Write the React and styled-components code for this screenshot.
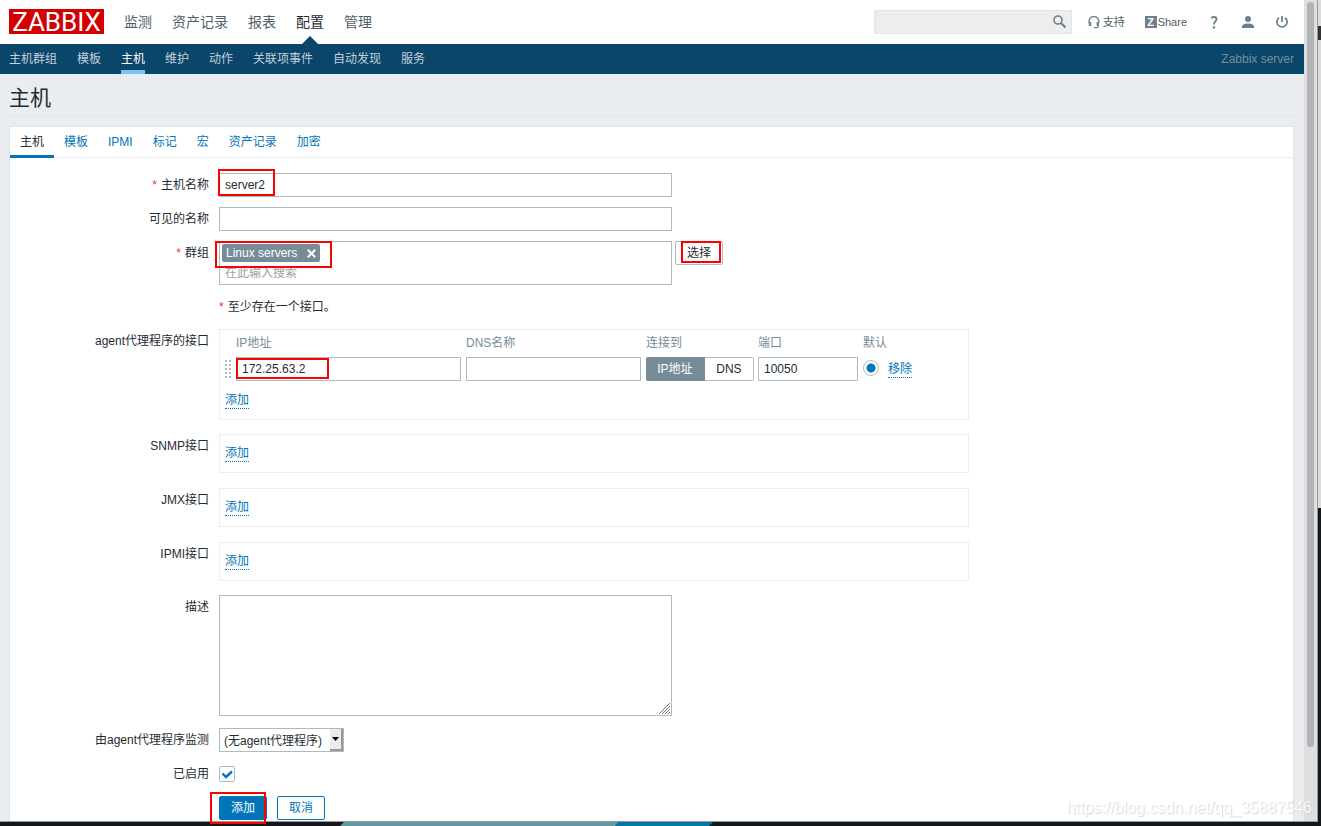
import React from "react";
import styled, { createGlobalStyle, css } from "styled-components";

const c = {
  text: "#1f2c33",
  link: "#0275b8",
  grey: "#768d99",
  field: "#acbbc2",
  line: "#dfe4e7",
  soft: "#ebeef0",
  navy: "#0a466a",
  icon: "#6c808d",
};

const GlobalStyle = createGlobalStyle`
  *, *::before, *::after { box-sizing: border-box; }
  body {
    margin: 0;
    background: #14171a;
    color: ${c.text};
    font: 12px/24px "Liberation Sans", "Noto Sans CJK SC", sans-serif;
  }
  button, input, select, textarea { font: inherit; color: inherit; margin: 0; }
  a { text-decoration: none; color: ${c.link}; }
  svg { display: block; }
`;

/* Desktop around the browser window */
const Desktop = styled.div`
  display: grid;
  grid-template-columns: minmax(0, 1fr) 3px;
  grid-template-rows: 1fr 4px;
  min-height: 100vh;
`;
const BrowserWindow = styled.div`
  position: relative;
  display: flex;
  border-right: 1px solid #999;
  border-bottom: 1px solid #999;
`;
const SideStrip = styled.div`
  display: grid;
  grid-template-rows: 26px 14px 468px 1fr;
  background: #14171a;
`;
const Slice = styled.div`
  background: ${(p) => p.$color};
`;
const Wallpaper = styled.svg`
  grid-column: 1 / -1;
  width: 100%;
  height: 4px;
`;
const Page = styled.div`
  flex: 1;
  min-width: 0;
  display: flex;
  flex-direction: column;
  background: #e9edf0;
`;
const ScrollTrack = styled.div`
  flex: none;
  display: grid;
  width: 13px;
  padding: 2px 3px 0;
  grid-template-rows: minmax(0, 91%) 1fr;
  background: #dfdfdf;
`;
const ScrollThumb = styled.div`
  border-radius: 4px;
  background: #b3b3b5;
`;
const Watermark = styled.div`
  position: absolute;
  right: 5px;
  bottom: 1px;
  font-size: 16px;
  color: #fff;
  opacity: 0.8;
  text-shadow: 1px 1px 1px #ccc;
  pointer-events: none;
`;

/* Header */
const Header = styled.header`
  display: flex;
  align-items: center;
  height: 44px;
  padding: 0 15px 0 9px;
  background: #fff;
`;
const Logo = styled.a`
  align-self: flex-start;
  width: 95px;
  height: 25px;
  margin: 9px 20px 0 0;
  background: #d40000;
  color: #fff;
  font-family: Roboto, "Liberation Sans", sans-serif;
  font-size: 26px;
  line-height: 26px;
  text-align: center;
`;
const MainNav = styled.nav`
  display: flex;
  gap: 20px;
  flex: 1;
`;
const MainLink = styled.a`
  position: relative;
  font-size: 14px;
  line-height: 44px;
  color: ${(p) => (p.$active ? c.text : "#4f5e67")};
  ${(p) =>
    p.$active &&
    css`
      &::after {
        content: "";
        position: absolute;
        left: 50%;
        bottom: 0;
        margin-left: -8px;
        border: 8px solid transparent;
        border-top: 0;
        border-bottom-color: ${c.navy};
      }
    `}
`;
const Search = styled.form`
  display: flex;
  align-items: center;
  width: 198px;
  height: 24px;
  margin-right: 16px;
  border: 1px solid ${c.line};
  background: #ededed;
`;
const SearchInput = styled.input`
  flex: 1;
  min-width: 0;
  border: 0;
  padding: 0 5px;
  background: none;
  outline: 0;
`;
const IconButton = styled.button`
  border: 0;
  padding: 0 5px 2px;
  background: none;
  color: ${c.icon};
`;
const Tools = styled.nav`
  display: flex;
  align-items: center;
  gap: 20px;
`;
const ToolLink = styled.a`
  display: flex;
  align-items: center;
  gap: ${(p) => p.$gap || 0}px;
  min-width: 14px;
  justify-content: center;
  font-size: 11px;
  color: #4f5e67;
  svg { color: ${c.icon}; }
`;
const ZMark = styled.span`
  width: 12px;
  height: 12px;
  margin-right: 1px;
  background: ${c.icon};
  color: #fff;
  font-weight: bold;
  line-height: 12px;
  text-align: center;
`;
const SubNav = styled.nav`
  display: flex;
  gap: 20px;
  height: 30px;
  padding: 0 10px 0 9px;
  background: ${c.navy};
`;
const SubLink = styled.a`
  line-height: 30px;
  color: ${(p) => (p.$active ? "#fff" : "#c2d1da")};
  box-shadow: ${(p) => (p.$active ? "inset 0 -4px #7ac3f3" : "none")};
`;
const ServerName = styled.span`
  margin-left: auto;
  line-height: 30px;
  color: #768d99;
`;

/* Card and tabs */
const Main = styled.main`
  flex: 1;
  display: flex;
  flex-direction: column;
  padding: 0 10px 0 9px;
`;
const Title = styled.h1`
  height: 42px;
  margin: 0 0 10px;
  border-bottom: 1px solid ${c.line};
  font-size: 21px;
  font-weight: normal;
  line-height: 48px;
`;
const Card = styled.section`
  flex: 1;
  border: 1px solid ${c.line};
  border-bottom: 0;
  background: #fff;
`;
const Tabs = styled.nav`
  display: flex;
  height: 31px;
  border-bottom: 1px solid ${c.soft};
`;
const Tab = styled.a`
  height: 31px;
  padding: 0 10px;
  line-height: 30px;
  color: ${(p) => (p.$active ? c.text : c.link)};
  box-shadow: ${(p) => (p.$active ? `inset 0 -3px ${c.link}` : "none")};
`;

/* Form */
const Form = styled.form`
  display: grid;
  gap: 10px;
  padding-top: 15px;
`;
const Row = styled.div`
  display: grid;
  grid-template-columns: 199px minmax(0, 1fr);
  column-gap: 10px;
  padding-bottom: ${(p) => p.$after || 0}px;
`;
const Label = styled.label`
  text-align: right;
`;
const Star = styled.span`
  color: #e33734;
  margin-right: 4px;
`;
const Field = styled.div`
  position: relative;
  display: flex;
  align-items: flex-start;
  gap: ${(p) => p.$gap || 0}px;
  min-height: 24px;
`;
const TextInput = styled.input`
  display: block;
  width: ${(p) => p.$width}px;
  max-width: 100%;
  height: 24px;
  padding: 0 5px;
  border: 1px solid ${c.field};
  background: #fff;
`;
const Highlight = styled.span`
  position: absolute;
  z-index: 1;
  left: ${(p) => p.$left}px;
  top: ${(p) => p.$top}px;
  width: ${(p) => p.$width}px;
  height: ${(p) => p.$height}px;
  border: 2px solid #f00;
  pointer-events: none;
`;
const MultiSelect = styled.div`
  width: 453px;
  height: 44px;
  padding: 2px;
  border: 1px solid ${c.field};
`;
const Chip = styled.span`
  display: flex;
  align-items: center;
  justify-content: space-between;
  width: 98px;
  height: 18px;
  padding: 0 4px;
  border-radius: 2px;
  background: ${c.grey};
  color: #fff;
  line-height: 18px;
`;
const ChipClose = styled.button`
  border: 0;
  padding: 0;
  background: none;
`;
const ChipInput = styled.input`
  display: block;
  width: 100%;
  height: 22px;
  padding: 0 3px;
  border: 0;
  background: none;
  outline: 0;
  &::placeholder { color: #a0a0a0; }
`;
const Button = styled.button`
  width: 48px;
  height: 24px;
  padding: 0;
  border: 1px solid ${(p) => (p.$kind === "plain" ? c.field : c.link)};
  border-radius: 2px;
  line-height: 22px;
  background: ${(p) => (p.$kind === "primary" ? c.link : "#fff")};
  color: ${(p) => ({ primary: "#fff", outline: c.link, plain: c.text })[p.$kind]};
`;
const Box = styled.div`
  width: 750px;
  padding: ${(p) => (p.$table ? "1px 5px 7px" : "6px 5px 7px")};
  border: 1px solid ${c.soft};
`;
const LinkLine = styled.div`
  display: flex;
  align-items: center;
  height: 24px;
`;
const DottedLink = styled.a`
  display: inline-block;
  line-height: 16px;
  border-bottom: 1px dotted ${c.link};
`;
const Table = styled.table`
  width: 100%;
  table-layout: fixed;
  border-collapse: collapse;
  margin-bottom: 7px;
  th {
    height: 24px;
    padding: 0;
    font-weight: normal;
    text-align: left;
    color: ${c.grey};
  }
  td {
    padding: 2px 0 0;
    vertical-align: middle;
  }
`;
const Cell = styled.div`
  position: relative;
`;
const Col = styled.col`
  width: ${(p) => p.$width}px;
`;
const Segments = styled.div`
  display: flex;
  width: 108px;
`;
const Segment = styled.label`
  position: relative;
  flex: ${(p) => p.$grow} 0 0;
  height: 24px;
  border: 1px solid ${c.field};
  border-left-width: 0;
  border-radius: 0 2px 2px 0;
  line-height: 22px;
  text-align: center;
  &:first-child { border-radius: 2px 0 0 2px; }
  &:has(input:checked) {
    border-color: ${c.grey};
    background: ${c.grey};
    color: #fff;
  }
  input {
    position: absolute;
    inset: 0;
    opacity: 0;
  }
`;
const Radio = styled.input`
  appearance: none;
  display: block;
  width: 16px;
  height: 16px;
  margin: 0 0 2px;
  border: 1px solid ${c.field};
  border-radius: 50%;
  &:checked { background: radial-gradient(circle, ${c.link} 4px, #fff 5px); }
`;
const TextArea = styled.textarea`
  display: block;
  width: 453px;
  height: 121px;
  padding: 4px 5px;
  border: 1px solid ${c.field};
  resize: none;
`;
const AreaWrap = styled.div`
  position: relative;
  svg {
    position: absolute;
    right: 2px;
    bottom: 2px;
    pointer-events: none;
  }
`;
const SelectWrap = styled.div`
  position: relative;
  width: 125px;
`;
const Select = styled.select`
  appearance: none;
  display: block;
  width: 100%;
  height: 24px;
  padding: 0 14px 0 4px;
  border: 1px solid ${c.field};
  border-radius: 0;
  background: #fff;
`;
const SelectArrow = styled.span`
  position: absolute;
  top: 1px;
  right: 1px;
  bottom: 1px;
  display: flex;
  align-items: center;
  justify-content: center;
  width: 13px;
  border: solid #999;
  border-width: 0 2px 2px 0;
  background: #ececec;
  pointer-events: none;
`;
const CheckWrap = styled.div`
  position: relative;
  align-self: center;
  svg {
    position: absolute;
    inset: 0;
    pointer-events: none;
  }
`;
const Checkbox = styled.input`
  appearance: none;
  display: block;
  width: 16px;
  height: 16px;
  border: 1px solid ${c.field};
  border-radius: 2px;
  background: #fff;
`;

const SearchIcon = () => (
  <svg width="13" height="13" viewBox="0 0 12 12" fill="none" stroke="currentColor" strokeWidth="1.5">
    <circle cx="4.6" cy="4.6" r="3.7" />
    <path d="M7.3 7.3 11.5 11.5" strokeWidth="2" />
  </svg>
);
const HeadsetIcon = () => (
  <svg width="12" height="13" viewBox="0 0 12 13" fill="none" stroke="currentColor">
    <path d="M1 7V5.5a4.8 4.8 0 0 1 9.8 0V7" strokeWidth="1.4" />
    <path d="M2 6v4M9.8 6v4" strokeWidth="2.4" />
    <path d="M10.3 9.5v.7c0 1-.6 1.5-1.6 1.5H6" strokeWidth="1.2" />
  </svg>
);
const HelpIcon = () => (
  <svg width="8" height="13" viewBox="0 0 8 13" fill="none" stroke="currentColor" strokeWidth="1.8">
    <path d="M1.2 2.2C2 1.4 3 1 4 1c1.5 0 2.5.9 2.5 2.2 0 2.2-2.5 2.3-2.5 5.2" />
    <path d="M4 10.3v2.2" strokeWidth="2.2" />
  </svg>
);
const UserIcon = () => (
  <svg width="12" height="12" viewBox="0 0 12 12" fill="currentColor">
    <circle cx="6" cy="3" r="3" />
    <path d="M0 12v-1.5C0 8.500 3 7.500 6 7.500s6 1 6 3V12z" />
  </svg>
);
const PowerIcon = () => (
  <svg width="12" height="12" viewBox="0 0 12 12" fill="none" stroke="currentColor" strokeWidth="1.7">
    <path d="M3 1.700a5.100 5.100 0 1 0 6 0M6 0v6" />
  </svg>
);
const CloseIcon = () => (
  <svg width="9" height="9" viewBox="0 0 9 9" stroke="#fff" strokeWidth="2">
    <path d="M.8.8 8.200 8.200M8.200.8.8 8.200" />
  </svg>
);
const DragHandle = () => (
  <svg width="6" height="18" viewBox="0 0 6 18" fill={c.field}>
    {[0, 4, 8, 12, 16].map((y) => (
      <path key={y} d={`M0 ${y}h2v2h-2zM4 ${y}h2v2h-2z`} />
    ))}
  </svg>
);

const mainItems = ["监测", "资产记录", "报表", "配置", "管理"];
const subItems = ["主机群组", "模板", "主机", "维护", "动作", "关联项事件", "自动发现", "服务"];
const tabItems = ["主机", "模板", "IPMI", "标记", "宏", "资产记录", "加密"];

function AddLink() {
  return (
    <LinkLine>
      <DottedLink href="#add">添加</DottedLink>
    </LinkLine>
  );
}

function InterfaceRow({ label, after }) {
  return (
    <Row $after={after}>
      <Label as="span">{label}</Label>
      <Field>
        <Box>
          <AddLink />
        </Box>
      </Field>
    </Row>
  );
}

export default function App() {
  return (
    <Desktop>
      <GlobalStyle />
      <BrowserWindow>
        <Page>
          <Header>
            <Logo href="#home">ZABBIX</Logo>
            <MainNav>
              {mainItems.map((t) => (
                <MainLink key={t} href="#menu" $active={t === "配置"}>{t}</MainLink>
              ))}
            </MainNav>
            <Search onSubmit={(e) => e.preventDefault()}>
              <SearchInput type="text" aria-label="搜索" />
              <IconButton aria-label="搜索"><SearchIcon /></IconButton>
            </Search>
            <Tools>
              <ToolLink href="#support" $gap={3}><HeadsetIcon />支持</ToolLink>
              <ToolLink href="#share"><ZMark>Z</ZMark>Share</ToolLink>
              <ToolLink href="#help" aria-label="帮助"><HelpIcon /></ToolLink>
              <ToolLink href="#profile" aria-label="用户"><UserIcon /></ToolLink>
              <ToolLink href="#logout" aria-label="退出"><PowerIcon /></ToolLink>
            </Tools>
          </Header>
          <SubNav>
            {subItems.map((t) => (
              <SubLink key={t} href="#submenu" $active={t === "主机"}>{t}</SubLink>
            ))}
            <ServerName>Zabbix server</ServerName>
          </SubNav>
          <Main>
            <Title>主机</Title>
            <Card>
              <Tabs>
                {tabItems.map((t) => (
                  <Tab key={t} href="#tab" $active={t === "主机"}>{t}</Tab>
                ))}
              </Tabs>
              <Form onSubmit={(e) => e.preventDefault()}>
                <Row>
                  <Label htmlFor="host"><Star>*</Star>主机名称</Label>
                  <Field>
                    <TextInput id="host" type="text" $width={453} defaultValue="server2" />
                    <Highlight $left={-1} $top={-4} $width={57} $height={27} />
                  </Field>
                </Row>
                <Row>
                  <Label htmlFor="visible">可见的名称</Label>
                  <Field>
                    <TextInput id="visible" type="text" $width={453} />
                  </Field>
                </Row>
                <Row>
                  <Label htmlFor="groups"><Star>*</Star>群组</Label>
                  <Field $gap={3}>
                    <MultiSelect>
                      <Chip>
                        Linux servers
                        <ChipClose type="button" aria-label="移除"><CloseIcon /></ChipClose>
                      </Chip>
                      <ChipInput id="groups" type="text" placeholder="在此输入搜索" />
                    </MultiSelect>
                    <Button type="button" $kind="plain">选择</Button>
                    <Highlight $left={-4} $top={0} $width={117} $height={27} />
                    <Highlight $left={462} $top={0} $width={40} $height={22} />
                  </Field>
                </Row>
                <Row>
                  <span />
                  <Field><Star>*</Star>至少存在一个接口。</Field>
                </Row>
                <Row $after={4}>
                  <Label as="span">agent代理程序的接口</Label>
                  <Field>
                    <Box $table>
                      <Table>
                        <colgroup>
                          {[11, 230, 180, 112, 105, 25].map((w) => (
                            <Col key={w} $width={w} />
                          ))}
                          <col />
                        </colgroup>
                        <thead>
                          <tr>
                            <th />
                            <th>IP地址</th>
                            <th>DNS名称</th>
                            <th>连接到</th>
                            <th>端口</th>
                            <th colSpan={2}>默认</th>
                          </tr>
                        </thead>
                        <tbody>
                          <tr>
                            <td><DragHandle /></td>
                            <td>
                              <Cell>
                                <TextInput type="text" aria-label="IP地址" $width={225} defaultValue="172.25.63.2" />
                                <Highlight $left={0} $top={1} $width={93} $height={21} />
                              </Cell>
                            </td>
                            <td><TextInput type="text" aria-label="DNS名称" $width={175} /></td>
                            <td>
                              <Segments>
                                <Segment $grow={59}><input type="radio" name="useip" defaultChecked />IP地址</Segment>
                                <Segment $grow={49}><input type="radio" name="useip" />DNS</Segment>
                              </Segments>
                            </td>
                            <td><TextInput type="text" aria-label="端口" $width={100} defaultValue="10050" /></td>
                            <td><Radio type="radio" name="main" aria-label="默认" defaultChecked /></td>
                            <td>
                              <LinkLine><DottedLink href="#remove">移除</DottedLink></LinkLine>
                            </td>
                          </tr>
                        </tbody>
                      </Table>
                      <AddLink />
                    </Box>
                  </Field>
                </Row>
                <InterfaceRow label="SNMP接口" after={5} />
                <InterfaceRow label="JMX接口" after={5} />
                <InterfaceRow label="IPMI接口" after={4} />
                <Row $after={2}>
                  <Label htmlFor="description">描述</Label>
                  <Field>
                    <AreaWrap>
                      <TextArea id="description" />
                      <svg width="11" height="11" viewBox="0 0 11 11" stroke="#777" strokeWidth="1">
                        <path d="M0 11 11 0M3 11 11 3M6 11 11 6M9 11 11 9" />
                      </svg>
                    </AreaWrap>
                  </Field>
                </Row>
                <Row>
                  <Label htmlFor="proxy">由agent代理程序监测</Label>
                  <Field>
                    <SelectWrap>
                      <Select id="proxy"><option>(无agent代理程序)</option></Select>
                      <SelectArrow>
                        <svg width="7" height="4" viewBox="0 0 7 4"><path d="M0 0h7L3.5 4z" /></svg>
                      </SelectArrow>
                    </SelectWrap>
                  </Field>
                </Row>
                <Row>
                  <Label htmlFor="enabled">已启用</Label>
                  <Field>
                    <CheckWrap>
                      <Checkbox id="enabled" type="checkbox" defaultChecked />
                      <svg width="16" height="16" viewBox="0 0 16 16" fill="none" stroke={c.link} strokeWidth="2.4">
                        <path d="M3.500 7.500 7 11l6-5.500" />
                      </svg>
                    </CheckWrap>
                  </Field>
                </Row>
                <Row>
                  <span />
                  <Field $gap={10}>
                    <Button type="submit" $kind="primary">添加</Button>
                    <Button type="button" $kind="outline">取消</Button>
                    <Highlight $left={-9} $top={-4} $width={56} $height={32} />
                  </Field>
                </Row>
              </Form>
            </Card>
          </Main>
        </Page>
        <ScrollTrack>
          <ScrollThumb />
        </ScrollTrack>
        <Watermark>https://blog.csdn.net/qq_35887546</Watermark>
      </BrowserWindow>
      <SideStrip>
        <Slice $color="#dcdcdc" />
        <Slice $color="#2e3234" />
        <Slice $color="#dcdcdc" />
      </SideStrip>
      <Wallpaper viewBox="0 0 1321 4" preserveAspectRatio="none">
        <path d="M0 0h1321v4H0z" fill="#14171a" />
        <path d="M344 0h275l-4 4H340z" fill="#5f9aa6" />
        <path d="M619 0h94l-4 4h-94z" fill="#0476a8" />
      </Wallpaper>
    </Desktop>
  );
}
